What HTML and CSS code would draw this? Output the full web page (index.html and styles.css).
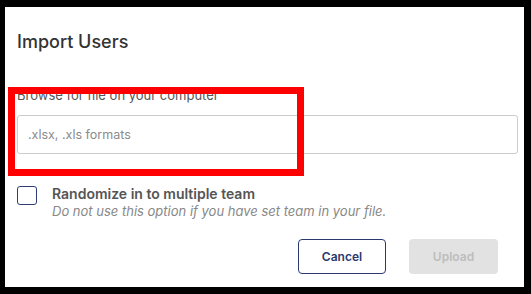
FILE: index.html
```html
<!DOCTYPE html>
<html lang="en">
<head>
  <meta charset="UTF-8">
  <meta name="viewport" content="width=device-width, initial-scale=1.0">
  <title>Import Users</title>
  <link rel="stylesheet" href="styles.css">
</head>
<body>
  <div class="modal">
    <h1 class="modal-title">Import Users</h1>

    <div class="field">
      <label class="field-label" for="file">Browse for file on your computer</label>
      <div class="file-input" id="file">.xlsx, .xls formats</div>
    </div>

    <div class="option">
      <span class="checkbox"></span>
      <div class="option-text">
        <div class="option-title">Randomize in to multiple team</div>
        <div class="option-hint">Do not use this option if you have set team in your file.</div>
      </div>
    </div>

    <div class="actions">
      <button class="btn btn-cancel">Cancel</button>
      <button class="btn btn-upload" disabled>Upload</button>
    </div>

    <!-- annotation box drawn over the screenshot -->
    <div class="highlight"></div>
  </div>
</body>
</html>
```

FILE: styles.css
```css
html, body {
  margin: 0;
  padding: 0;
  background: #000;
  height: 294px;
  overflow: hidden;
}

body {
  padding: 7px 7px 7px 5px;
  box-sizing: border-box;
  font-family: Inter, "Liberation Sans", sans-serif;
}

.modal {
  position: relative;
  background: #fff;
  height: 280px;
  padding: 24px 6px 0 12px;
  box-sizing: border-box;
}

.modal-title {
  margin: 0;
  font-size: 18px;
  line-height: 22px;
  font-weight: 500;
  color: #333;
}

.field {
  margin-top: 34px;
}

.field-label {
  display: block;
  font-size: 13px;
  line-height: 16px;
  font-weight: 400;
  color: #555;
}

.file-input {
  margin-top: 12px;
  height: 39px;
  border: 1px solid #ccc;
  border-radius: 3px;
  box-sizing: border-box;
  padding: 0 10px;
  display: flex;
  align-items: center;
  font-size: 12.5px;
  color: #8a8a8a;
}

.option {
  margin-top: 32px;
  display: flex;
  gap: 15px;
}

.checkbox {
  width: 20px;
  height: 19px;
  border: 1.5px solid #2e3d78;
  border-radius: 3px;
  box-sizing: border-box;
  flex: none;
}

.option-title {
  font-size: 14px;
  line-height: 16px;
  font-weight: 600;
  color: #555;
}

.option-hint {
  margin-top: 1px;
  font-size: 13px;
  line-height: 16px;
  font-style: italic;
  color: #888;
}

.actions {
  margin-top: 20px;
  padding-right: 20px;
  display: flex;
  justify-content: flex-end;
  gap: 23px;
}

.btn {
  width: 88px;
  height: 35px;
  border-radius: 4px;
  font-family: inherit;
  font-size: 12px;
  font-weight: 600;
  cursor: pointer;
}

.btn-cancel {
  background: #fff;
  color: #2b3a6e;
  border: 1.5px solid #2b3a6e;
}

.btn-upload {
  width: 89px;
  background: #e2e2e2;
  color: #bdbdbd;
  border: none;
  cursor: not-allowed;
}

.highlight {
  position: absolute;
  left: 3px;
  top: 80px;
  width: 296px;
  height: 89px;
  border: 7px solid #f00;
  box-sizing: border-box;
}
```
